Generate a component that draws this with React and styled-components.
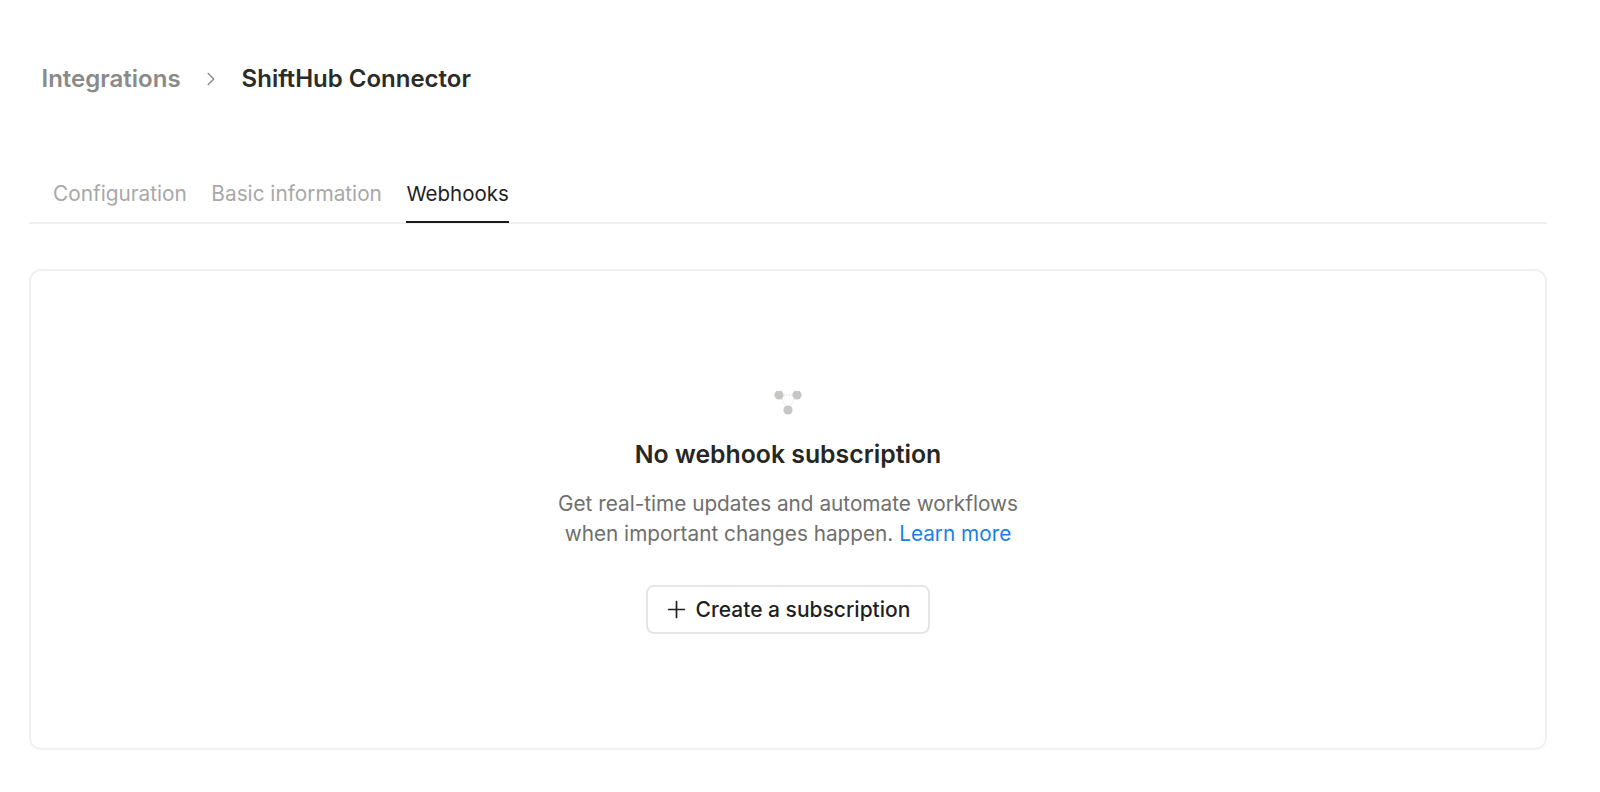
import React from "react";
import styled, { createGlobalStyle } from "styled-components";
import { ChevronRight, Plus } from "lucide-react";

const Global = createGlobalStyle`
  html, body { margin: 0; padding: 0; background: #fff; }
  body { font-family: Inter, "Liberation Sans", sans-serif; -webkit-font-smoothing: antialiased; }
`;

const Page = styled.div`
  width: 1600px;
  height: 792px;
  box-sizing: border-box;
  padding: 61px 53px 0 29px;
  overflow: hidden;
`;

const Breadcrumb = styled.nav`
  display: flex;
  align-items: center;
  height: 36px;
  padding-left: 12.5px;
  font-size: 24px;
  line-height: 36px;
  font-weight: 600;
`;

const Crumb = styled.span`
  color: #8a8a8a;
`;

const Current = styled.span`
  color: #2b2b29;
`;

const Separator = styled.span`
  display: flex;
  align-items: center;
  justify-content: center;
  width: 61px;
  color: #8c8c8c;
`;

const Tabs = styled.div`
  display: flex;
  gap: 24.5px;
  height: 60px;
  margin-top: 65px;
  padding-left: 24px;
  border-bottom: 2px solid #f0f0f0;
`;

const Tab = styled.div`
  height: 61px;
  line-height: 63px;
  font-size: ${(p) => (p.$active ? "20.5px" : "20.8px")};
  color: ${(p) => (p.$active ? "#1f1f1f" : "#a8a8a8")};
  box-sizing: border-box;
  border-bottom: ${(p) => (p.$active ? "2px solid #1a1a1a" : "none")};
`;

const Card = styled.section`
  box-sizing: border-box;
  height: 481px;
  margin-top: 45px;
  border: 2px solid #f1f1f1;
  border-radius: 12px;
  display: flex;
  flex-direction: column;
  align-items: center;
  padding-top: 120px;
`;

const EmptyIcon = styled.svg`
  display: block;
  width: 28px;
  height: 26px;
`;

const Title = styled.h2`
  margin: 19px 0 0;
  font-size: 24.8px;
  line-height: 36px;
  font-weight: 600;
  color: #262622;
`;

const Description = styled.p`
  margin: 17px 0 0;
  font-size: 20.75px;
  line-height: 30px;
  color: #6f6f6d;
  text-align: center;
`;

const LearnMore = styled.a`
  color: #1a7fe8;
  text-decoration: none;
`;

const Button = styled.button`
  display: flex;
  align-items: center;
  gap: 6px;
  height: 49px;
  margin-top: 36px;
  padding: 0 18px 0 15px;
  background: #fff;
  border: 2px solid #e6e6e6;
  border-radius: 8px;
  font-family: inherit;
  font-size: 21px;
  font-weight: 500;
  color: #1f1f1f;
`;

export default function App() {
  return (
    <Page>
      <Global />
      <Breadcrumb>
        <Crumb>Integrations</Crumb>
        <Separator>
          <ChevronRight size={22} strokeWidth={1.5} />
        </Separator>
        <Current>ShiftHub Connector</Current>
      </Breadcrumb>
      <Tabs>
        <Tab>Configuration</Tab>
        <Tab>Basic information</Tab>
        <Tab $active>Webhooks</Tab>
      </Tabs>
      <Card>
        <EmptyIcon viewBox="0 0 28 26">
          <path d="M5 4H23M5 4L14 19M23 4L14 19" stroke="#d2d2d2" strokeWidth="1" strokeDasharray="1 1.5" fill="none" />
          <circle cx="5" cy="4" r="4.6" fill="#c6c6c4" />
          <circle cx="23" cy="4" r="4.6" fill="#c6c6c4" />
          <circle cx="14" cy="19" r="4.6" fill="#c6c6c4" />
        </EmptyIcon>
        <Title>No webhook subscription</Title>
        <Description>
          Get real-time updates and automate workflows
          <br />
          when important changes happen. <LearnMore>Learn more</LearnMore>
        </Description>
        <Button>
          <Plus size={27} strokeWidth={1.5} />
          Create a subscription
        </Button>
      </Card>
    </Page>
  );
}
